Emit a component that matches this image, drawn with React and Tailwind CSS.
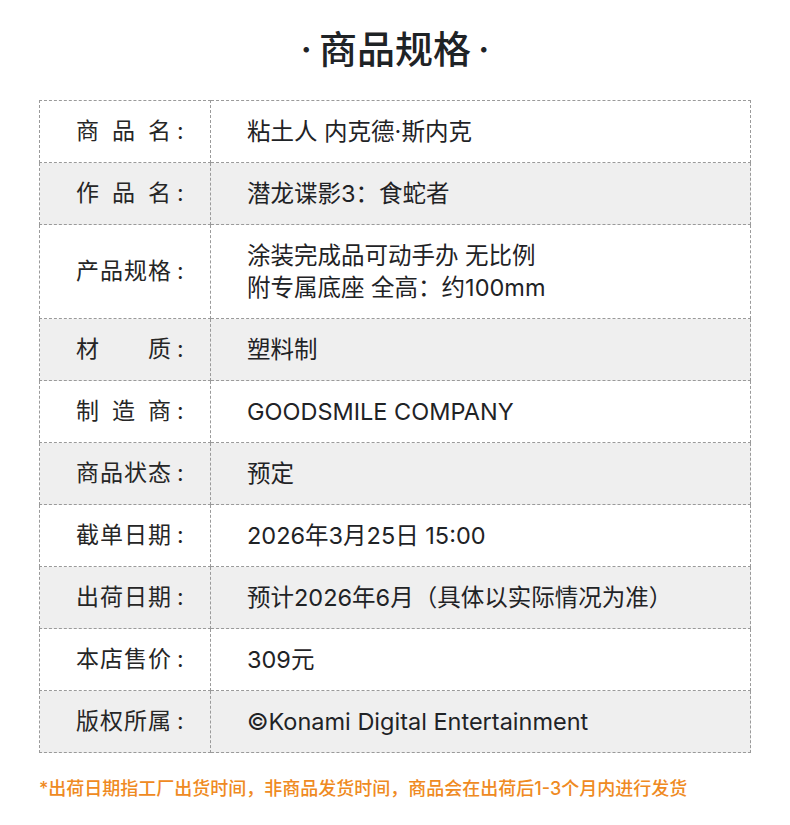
import React from "react";

const rows = [
    { label: "商品名", value: ["粘土人 内克德·斯内克"] },
    { label: "作品名", value: ["潜龙谍影3：食蛇者"] },
    { label: "产品规格", value: ["涂装完成品可动手办 无比例", "附专属底座 全高：约100mm"] },
    { label: "材质", value: ["塑料制"] },
    { label: "制造商", value: ["GOODSMILE COMPANY"] },
    { label: "商品状态", value: ["预定"] },
    { label: "截单日期", value: ["2026年3月25日 15:00"] },
    { label: "出荷日期", value: ["预计2026年6月（具体以实际情况为准）"] },
    { label: "本店售价", value: ["309元"] },
    { label: "版权所属", value: ["©Konami Digital Entertainment"] },
];

const Label = ({ text }) => (
    <div className="flex items-center pl-[36px]">
        <span className="flex w-[95px] justify-between">
            {text.split("").map((c, i) => (
                <span key={i}>{c}</span>
            ))}
        </span>
        <span className="ml-[6px]">:</span>
    </div>
);

const App = () => {
    return (
        <div
            className="w-[790px] min-h-[825px] bg-white pt-[21px]"
            style={{ fontFamily: 'Inter, "Noto Sans CJK SC", sans-serif' }}
        >
            <h1 className="flex justify-center text-[38px] font-medium leading-[56px] text-[#1f2326]">
                <span className="mr-[7px]">·</span>
                <span>商品规格</span>
                <span className="ml-[7px]">·</span>
            </h1>
            <div className="mx-[39px] mt-[23px]">
                <table className="w-full border-collapse border border-dashed border-[#9a9a9a]">
                    <tbody>
                        {rows.map((r, i) => (
                            <tr key={i} className={i % 2 === 1 ? "bg-[#efefef]" : "bg-white"}>
                                <td
                                    className={`w-[171px] border border-dashed border-[#9a9a9a] text-[23px] text-[#262626] ${
                                        r.value.length > 1 ? "h-[94px]" : "h-[62px]"
                                    }`}
                                >
                                    <Label text={r.label} />
                                </td>
                                <td className="border border-dashed border-[#9a9a9a] pl-[36px] text-[23.5px] leading-[32px] text-[#1f2326]">
                                    {r.value.map((v, j) => (
                                        <div key={j}>{v}</div>
                                    ))}
                                </td>
                            </tr>
                        ))}
                    </tbody>
                </table>
            </div>
            <p className="mx-[39px] mt-[22px] text-[18px] font-medium text-[#ef8a22]">
                *出荷日期指工厂出货时间，非商品发货时间，商品会在出荷后1-3个月内进行发货
            </p>
        </div>
    );
};

export default App;
